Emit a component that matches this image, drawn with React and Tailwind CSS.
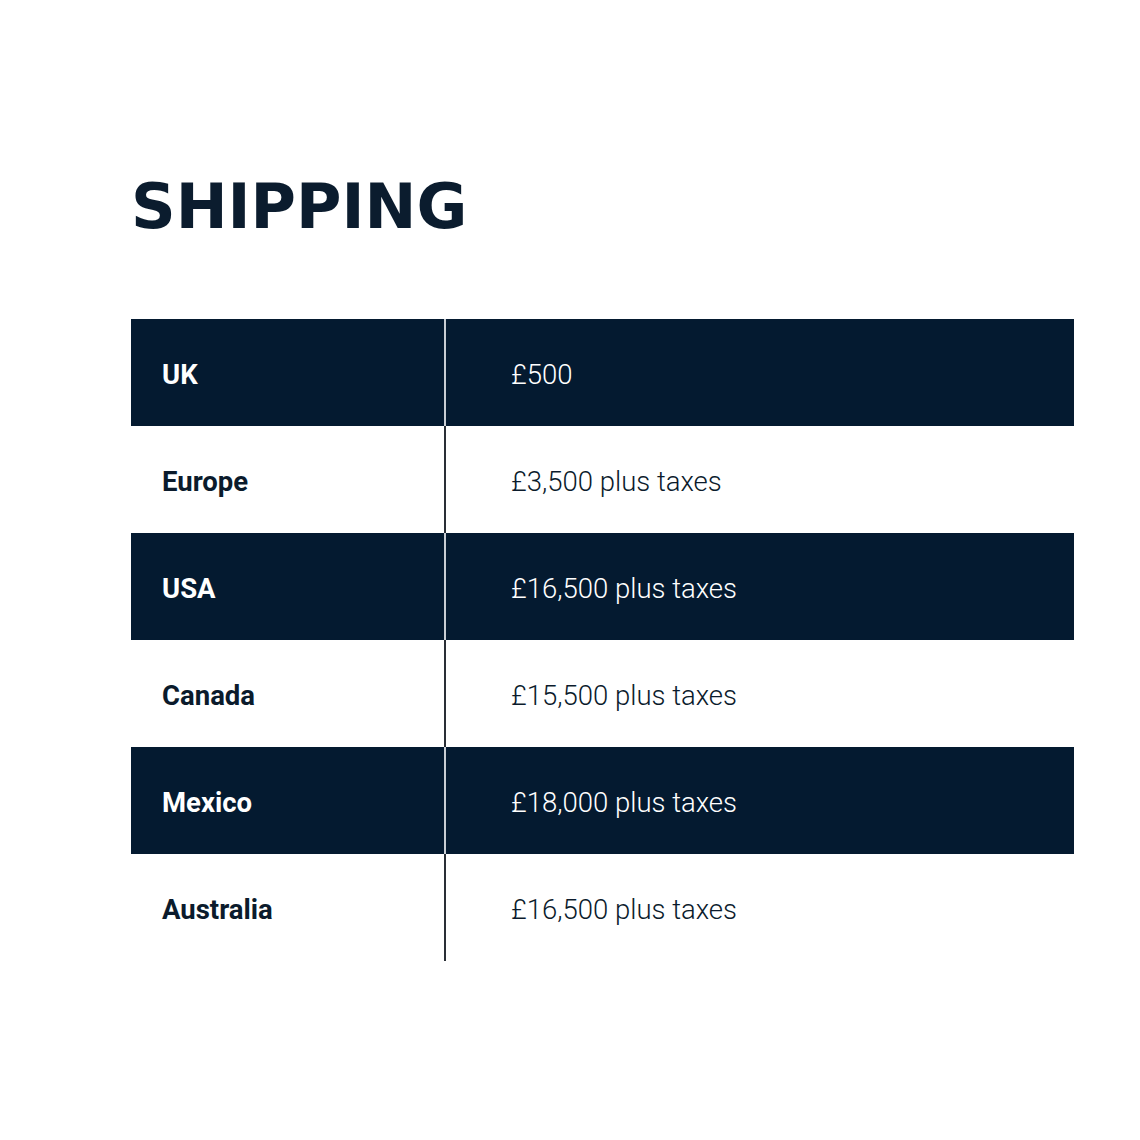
import React from "react";

const rows = [
  { country: "UK", price: "£500", dark: true },
  { country: "Europe", price: "£3,500 plus taxes", dark: false },
  { country: "USA", price: "£16,500 plus taxes", dark: true },
  { country: "Canada", price: "£15,500 plus taxes", dark: false },
  { country: "Mexico", price: "£18,000 plus taxes", dark: true },
  { country: "Australia", price: "£16,500 plus taxes", dark: false },
];

const ShippingRow = ({ row }) => {
  return (
    <div
      className={
        row.dark
          ? "flex h-[107px] bg-[#041a30] text-white"
          : "flex h-[107px] bg-white text-[#0b1b2c]"
      }
    >
      <div className="w-[313px] flex items-center pl-[31px] pt-[4px] text-[27.5px] font-bold font-['Roboto',sans-serif]">
        {row.country}
      </div>
      <div className={row.dark ? "w-[2px] bg-[#c9ced4]" : "w-[2px] bg-[#2a2f36]"}></div>
      <div className="flex-1 flex items-center pl-[65px] pt-[4px] text-[27.5px] font-light font-['Roboto',sans-serif]">
        {row.price}
      </div>
    </div>
  );
};

export default function App() {
  return (
    <div className="w-[1140px] h-[1140px] bg-white pt-[176px] pl-[131px] pr-[66px]">
      <h1 className="text-[62px] leading-none font-bold text-[#0b1c2e] font-['DejaVu_Sans',sans-serif]">
        SHIPPING
      </h1>
      <div className="mt-[81px]">
        {rows.map((row) => (
          <ShippingRow key={row.country} row={row} />
        ))}
      </div>
    </div>
  );
}
